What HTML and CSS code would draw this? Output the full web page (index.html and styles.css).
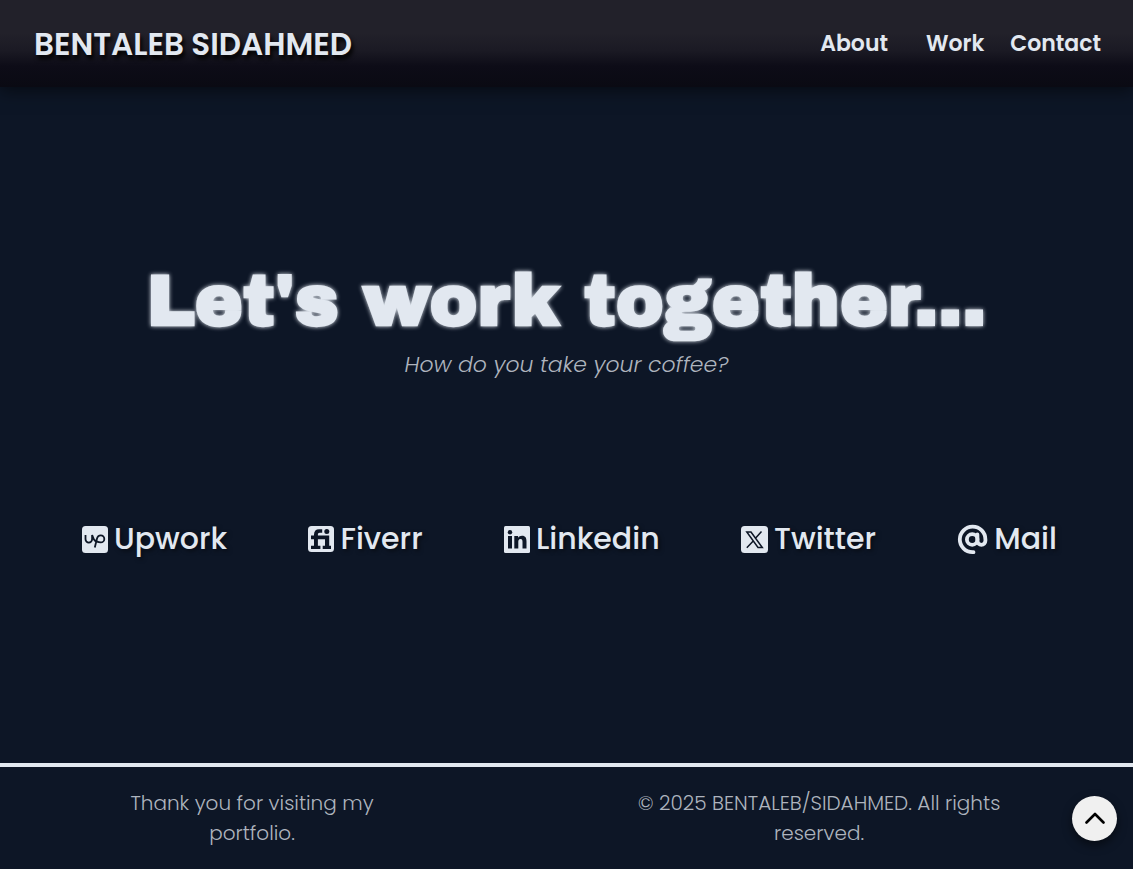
FILE: index.html
```html
<!DOCTYPE html>
<html lang="en">
<head>
<meta charset="utf-8">
<meta name="viewport" content="width=device-width, initial-scale=1">
<title>Bentaleb Sidahmed</title>
<link rel="stylesheet" href="styles.css">
</head>
<body>
<header class="navbar">
  <a class="brand" href="#top">BENTALEB SIDAHMED</a>
  <nav class="nav-links">
    <a class="about" href="#about">About</a>
    <a href="#work">Work</a>
    <a href="#contact">Contact</a>
  </nav>
</header>
<main class="contact" id="contact">
  <div class="intro">
    <h1>Let's work together...</h1>
    <p>How do you take your coffee?</p>
  </div>
  <div class="socials">
    <a href="#upwork"><svg width="26" height="27" viewBox="0 0 26 27" aria-hidden="true"><rect width="26" height="27" rx="3.5" fill="#e2e8f0"/><path d="M3.500 9v4.300a3.300 3.300 0 0 0 6.600 0V9c.8 3.200 2.300 5.600 4.500 7M12.800 21.500l2-8.300c.6-2.500 2-3.800 4-3.800a3.500 3.500 0 0 1 0 7c-1.600 0-3-.5-4-1.200" fill="none" stroke="#0d1626" stroke-width="1.800"/></svg>Upwork</a>
    <a href="#fiverr"><svg width="26" height="26" viewBox="0 0 26 26" aria-hidden="true"><rect width="26" height="26" rx="3.500" fill="#e2e8f0"/><path d="M3 9.500h3V8.500C6 5 8 3.300 11 3.300h3.200v3.400h-2.500c-1.200 0-1.800.7-1.800 1.800v1h11.300v10.200h1.800V23h-8.300v-3.300h2.300v-6.500H9.900v6.500h2.500V23H3v-3.300h3v-6.500H3z" fill="#0d1626"/><circle cx="18.800" cy="5.500" r="2.500" fill="#0d1626"/></svg>Fiverr</a>
    <a href="#linkedin"><svg width="26" height="27" viewBox="0 0 26 27" aria-hidden="true"><rect width="26" height="27" rx="1.500" fill="#e2e8f0"/><path d="M4 10h4v12.500H4zM10.300 10h3.800v1.800c.8-1.400 2.100-2.100 3.900-2.100 3.600 0 4.500 2.400 4.500 5.700v7.100h-4v-6.300c0-1.700-.1-3.300-2-3.300s-2.200 1.500-2.200 3.200v6.400h-4z" fill="#0d1626"/><circle cx="6" cy="6.200" r="2.200" fill="#0d1626"/></svg>Linkedin</a>
    <a href="#twitter"><svg width="27" height="27" viewBox="0 0 27 27" aria-hidden="true"><rect width="27" height="27" rx="3.500" fill="#e2e8f0"/><path d="M5.800 6h4.200l11.300 15.500H17zM20.500 5.500l-6.500 7.300M12 15.200l-6.200 6.600" fill="none" stroke="#0d1626" stroke-width="1.500"/></svg>Twitter</a>
    <a href="#mail"><svg width="31" height="31" viewBox="0 0 31 31" aria-hidden="true"><path d="M16.500 28.200h-1A12.800 12.800 0 1 1 28.400 15.500v1.300a4 4 0 0 1-8 0V10.500" fill="none" stroke="#e2e8f0" stroke-width="3.800" stroke-linecap="round"/><circle cx="15.200" cy="15.500" r="5.300" fill="none" stroke="#e2e8f0" stroke-width="3.800"/></svg>Mail</a>
  </div>
</main>
<footer class="footer">
  <p class="thanks">Thank you for visiting my portfolio.</p>
  <p class="rights">© 2025 BENTALEB/SIDAHMED. All rights reserved.</p>
</footer>
<button class="to-top" type="button" aria-label="Back to top"><svg width="20" height="12" viewBox="0 0 20 12" aria-hidden="true"><path d="M1.500 10.500 10 2l8.500 8.500" fill="none" stroke="#000" stroke-width="2.600" stroke-linecap="round" stroke-linejoin="round"/></svg></button>
</body>
</html>
```
FILE: styles.css
```css
* { box-sizing: border-box; margin: 0; }
body {
  min-height: 100vh;
  display: flex;
  flex-direction: column;
  background: #0d1626;
  color: #e2e8f0;
  font-family: Poppins, Inter, sans-serif;
}
a { color: inherit; text-decoration: none; }
.navbar {
  display: flex;
  align-items: center;
  justify-content: space-between;
  padding: 20px 32px 19px 34px;
  background: linear-gradient(#22212a 38%, #1b1a24 58%, #0d0c17 76%, #0a0a13);
  box-shadow: 0 4px 16px rgba(0, 0, 0, .5);
}
.brand {
  font-size: 31px;
  line-height: 48px;
  font-weight: 600;
  text-shadow: 2px 4px 4px #000;
}
.nav-links { display: flex; gap: 26px; font-size: 22px; line-height: 32px; font-weight: 600; }
.about { margin-right: 12px; }
.contact { flex: 1; }
.intro { padding: 164px 24px 0; text-align: center; }
h1 {
  font: 900 72px/100px "Arial Black", "Archivo Black", Inter, sans-serif;
  text-shadow: 0 0 4px #e2e8f0;
}
.intro p { font-size: 22px; line-height: 28px; font-weight: 300; font-style: italic; color: #aeb4be; }
.socials { display: flex; justify-content: space-between; padding: 136px 76px 0 82px; }
.socials a {
  display: flex;
  align-items: center;
  gap: 6px;
  font-size: 30px;
  line-height: 48px;
  font-weight: 500;
  text-shadow: 2px 2px 4px rgba(0, 0, 0, .5);
}
.footer {
  display: flex;
  justify-content: space-between;
  padding: 21px 96px 21px 112px;
  border-top: 4px solid #e2e8f0;
  font-size: 20px;
  line-height: 30px;
  font-weight: 300;
  text-align: center;
  color: #aeb4be;
}
.thanks { width: 280px; }
.rights { width: 436px; }
.to-top {
  position: fixed;
  right: 16px;
  bottom: 28px;
  width: 45px;
  height: 45px;
  padding: 0 0 2px;
  display: grid;
  place-items: center;
  border: 0;
  border-radius: 50%;
  background: #f0f0f0;
  box-shadow: 0 4px 10px rgba(0, 0, 0, .5);
}
```
